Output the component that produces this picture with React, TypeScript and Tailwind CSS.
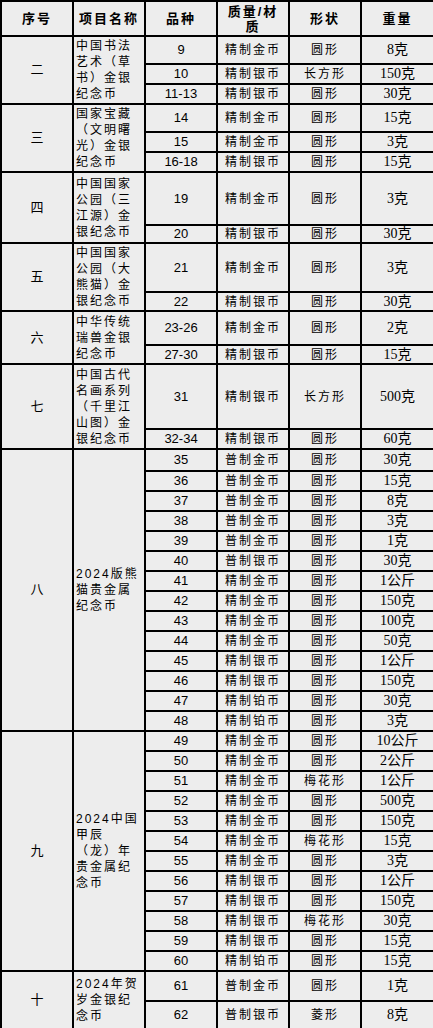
import React from 'react';

type Row = { v: string; m: string; s: string; w: string; h: string };
type Group = { no: string; name: string[]; rows: Row[] };

const r = (v: string, m: string, s: string, w: string, h = 'h-[20px]'): Row => ({ v, m, s, w, h });

const groups: Group[] = [
    {
        no: '二',
        name: ['中国书法', '艺术（草', '书）金银', '纪念币'],
        rows: [r('9', '精制金币', '圆形', '8克', 'h-[28px]'), r('10', '精制银币', '长方形', '150克'), r('11-13', '精制银币', '圆形', '30克')],
    },
    {
        no: '三',
        name: ['国家宝藏', '（文明曙', '光）金银', '纪念币'],
        rows: [r('14', '精制金币', '圆形', '15克', 'h-[28px]'), r('15', '精制金币', '圆形', '3克'), r('16-18', '精制银币', '圆形', '15克')],
    },
    {
        no: '四',
        name: ['中国国家', '公园（三', '江源）金', '银纪念币'],
        rows: [r('19', '精制金币', '圆形', '3克', 'h-[53px]'), r('20', '精制银币', '圆形', '30克', 'h-[18px]')],
    },
    {
        no: '五',
        name: ['中国国家', '公园（大', '熊猫）金', '银纪念币'],
        rows: [r('21', '精制金币', '圆形', '3克', 'h-[49px]'), r('22', '精制银币', '圆形', '30克', 'h-[19px]')],
    },
    {
        no: '六',
        name: ['中华传统', '瑞兽金银', '纪念币'],
        rows: [r('23-26', '精制金币', '圆形', '2克', 'h-[34px]'), r('27-30', '精制银币', '圆形', '15克', 'h-[19px]')],
    },
    {
        no: '七',
        name: ['中国古代', '名画系列', '（千里江', '山图）金', '银纪念币'],
        rows: [r('31', '精制银币', '长方形', '500克', 'h-[65px]'), r('32-34', '精制银币', '圆形', '60克')],
    },
    {
        no: '八',
        name: ['2024版熊', '猫贵金属', '纪念币'],
        rows: [
            r('35', '普制金币', '圆形', '30克', 'h-[22px]'),
            r('36', '普制金币', '圆形', '15克'),
            r('37', '普制金币', '圆形', '8克'),
            r('38', '普制金币', '圆形', '3克'),
            r('39', '普制金币', '圆形', '1克'),
            r('40', '普制银币', '圆形', '30克'),
            r('41', '精制金币', '圆形', '1公斤'),
            r('42', '精制金币', '圆形', '150克'),
            r('43', '精制金币', '圆形', '100克'),
            r('44', '精制金币', '圆形', '50克'),
            r('45', '精制银币', '圆形', '1公斤'),
            r('46', '精制银币', '圆形', '150克'),
            r('47', '精制铂币', '圆形', '30克'),
            r('48', '精制铂币', '圆形', '3克'),
        ],
    },
    {
        no: '九',
        name: ['2024中国', '甲辰', '（龙）年', '贵金属纪', '念币'],
        rows: [
            r('49', '精制金币', '圆形', '10公斤'),
            r('50', '精制金币', '圆形', '2公斤'),
            r('51', '精制金币', '梅花形', '1公斤'),
            r('52', '精制金币', '圆形', '500克'),
            r('53', '精制金币', '圆形', '150克'),
            r('54', '精制金币', '梅花形', '15克'),
            r('55', '精制金币', '圆形', '3克'),
            r('56', '精制银币', '圆形', '1公斤'),
            r('57', '精制银币', '圆形', '150克'),
            r('58', '精制银币', '梅花形', '30克'),
            r('59', '精制银币', '圆形', '15克'),
            r('60', '精制铂币', '圆形', '15克'),
        ],
    },
    {
        no: '十',
        name: ['2024年贺', '岁金银纪', '念币'],
        rows: [r('61', '普制金币', '圆形', '1克', 'h-[30px]'), r('62', '普制银币', '菱形', '8克', 'h-[28px]')],
    },
];

const cjk = '[font-family:"Liberation_Sans","Noto_Sans_CJK_SC",sans-serif]';
const cell = 'border-2 border-black p-0 text-center align-middle';

export default function App() {
    return (
        <div className="w-[433px] h-[1028px] overflow-hidden bg-white">
            <table className={`table-fixed border-collapse w-[433px] bg-[#ededed] text-black ${cjk}`}>
                <colgroup>
                    <col className="w-[72px]" />
                    <col className="w-[72px]" />
                    <col className="w-[72px]" />
                    <col className="w-[72px]" />
                    <col className="w-[72px]" />
                    <col className="w-[73px]" />
                </colgroup>
                <thead>
                    <tr className="h-[35px] text-[13px] font-bold leading-[15px] tracking-[2px]">
                        <th className={cell}>序号</th>
                        <th className={cell}>项目名称</th>
                        <th className={cell}>品种</th>
                        <th className={cell}>
                            质量/材
                            <br />质
                        </th>
                        <th className={cell}>形状</th>
                        <th className={cell}>重量</th>
                    </tr>
                </thead>
                <tbody>
                    {groups.map((g) =>
                        g.rows.map((row, i) => (
                            <tr key={g.no + row.v} className={row.h}>
                                {i === 0 && (
                                    <>
                                        <td rowSpan={g.rows.length} className={`${cell} text-[13px]`}>
                                            {g.no}
                                        </td>
                                        <td
                                            rowSpan={g.rows.length}
                                            className="border-2 border-black p-0 pl-[2px] text-left align-middle text-[12px] leading-[16px] tracking-[2px] whitespace-nowrap"
                                        >
                                            {g.name.map((line) => (
                                                <div key={line}>{line}</div>
                                            ))}
                                        </td>
                                    </>
                                )}
                                <td className={`${cell} text-[13px] leading-[16px]`}>{row.v}</td>
                                <td className={`${cell} text-[12px] leading-[16px] tracking-[2px]`}>{row.m}</td>
                                <td className={`${cell} text-[12px] leading-[16px] tracking-[2px]`}>{row.s}</td>
                                <td
                                    className={`${cell} text-[14px] leading-[16px] [font-family:"Liberation_Serif","Noto_Sans_CJK_SC",serif]`}
                                >
                                    {row.w}
                                </td>
                            </tr>
                        ))
                    )}
                </tbody>
            </table>
        </div>
    );
}
